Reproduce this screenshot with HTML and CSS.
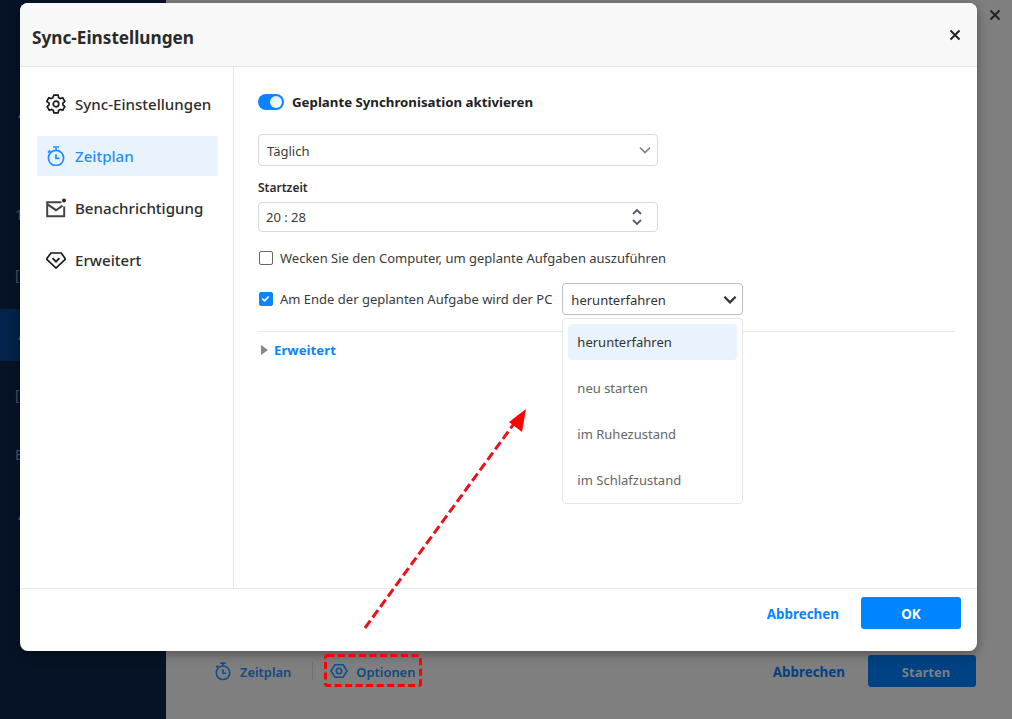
FILE: index.html
```html
<!DOCTYPE html>
<html lang="de">
<head>
<meta charset="utf-8">
<title>Sync-Einstellungen</title>
<link rel="stylesheet" href="styles.css">
</head>
<body>
<div class="app">
  <aside class="app-side">
    <span class="ghost ghost-first">▲</span>
    <span class="ghost">1</span>
    <span class="ghost">[</span>
    <span class="ghost ghost-active">▲</span>
    <span class="ghost">[</span>
    <span class="ghost">E</span>
    <span class="ghost">▲</span>
  </aside>
  <main class="app-main">
    <div class="app-top"><svg class="icon-x" viewBox="0 0 12 12"><path d="M1.5 1.5l9 9M10.5 1.5l-9 9"/></svg></div>
    <div class="app-bottom">
      <span class="app-link"><svg class="icon-18" viewBox="0 0 20 20"><path d="M7 1.3h6M10 1.5v3M10 4.5a7.5 7.5 0 1 0 0 15 7.5 7.5 0 0 0 0-15zM10 8v4.5h3.5M2.5 6l2-2"/></svg><span class="nudge">Zeitplan</span></span>
      <span class="app-divider"></span>
      <span class="app-link"><svg class="icon-18" viewBox="0 0 20 20"><path d="M5.5 3h9l4.5 7-4.5 7h-9L1 10z"/><circle cx="10" cy="10" r="3"/></svg><span class="nudge">Optionen</span></span>
      <span class="app-spacer"></span>
      <span class="app-cancel nudge">Abbrechen</span>
      <span class="app-start">Starten</span>
    </div>
  </main>
</div>

<section class="dialog">
  <header class="dialog-head">
    <h1>Sync-Einstellungen</h1>
    <svg class="icon-x" viewBox="0 0 12 12"><path d="M1.5 1.5l9 9M10.5 1.5l-9 9"/></svg>
  </header>
  <div class="dialog-body">
    <nav class="tabs">
      <a class="tab">
        <svg class="tab-icon" viewBox="0 0 20 20"><path d="M7.9 1.2h4.2l.6 2.5 1.5.9 2.5-.8 2.1 3.6-1.9 1.7v1.8l1.9 1.7-2.1 3.6-2.5-.8-1.5.9-.6 2.5H7.9l-.6-2.5-1.5-.9-2.5.8-2.1-3.6 1.9-1.7V9.1L.7 7.4l2.1-3.6 2.5.8 1.5-.9z"/><circle cx="10" cy="10" r="2.8"/></svg>
        Sync-Einstellungen
      </a>
      <a class="tab tab-active">
        <svg class="tab-icon" viewBox="0 0 20 20"><path d="M7 1h6M10 2v2.4M10 4.4a7.6 7.6 0 1 0 0 15.2 7.6 7.6 0 0 0 0-15.2zM10 8.3v4h3.5M2 6.6l2.3-2.3"/></svg>
        Zeitplan
      </a>
      <a class="tab">
        <svg class="tab-icon tab-icon-mail" viewBox="0 0 20 20"><path d="M15.5 4.2H1.2v14h17V8.5M1.2 6.2l8.8 6 6.5-4.6"/><circle class="dot" cx="18" cy="2.6" r="2"/></svg>
        Benachrichtigung
      </a>
      <a class="tab">
        <svg class="tab-icon" viewBox="0 0 20 20"><path d="M5 3h10.2L19.5 9 10 18 .5 9z"/><path d="M6.5 8.2L10 11.7l3.5-3.5"/></svg>
        Erweitert
      </a>
    </nav>
    <div class="panel">
      <div class="switch-row">
        <span class="switch"><span class="switch-knob"></span></span>
        <strong>Geplante Synchronisation aktivieren</strong>
      </div>
      <div class="field field-select">
        <span class="field-text">Täglich</span>
        <svg class="chev" viewBox="0 0 12 8"><path d="M1 1.5l5 5 5-5"/></svg>
      </div>
      <label class="field-label">Startzeit</label>
      <div class="field field-time">
        <span>20 : 28</span>
        <svg class="spin" viewBox="0 0 12 20"><path d="M2 7l4-4 4 4M2 13l4 4 4-4"/></svg>
      </div>
      <div class="check-row check-row-first">
        <span class="check"></span>
        <span>Wecken Sie den Computer, um geplante Aufgaben auszuführen</span>
      </div>
      <div class="check-row check-row-second">
        <span class="check check-on"><svg viewBox="0 0 14 14"><path d="M3 7.2l2.8 2.8L11 4.5"/></svg></span>
        <span>Am Ende der geplanten Aufgabe wird der PC</span>
        <div class="combo">
          <span class="nudge">herunterfahren</span>
          <svg class="chev chev-dark" viewBox="0 0 12 8"><path d="M1 1.5l5 5 5-5"/></svg>
          <ul class="menu">
            <li class="menu-item menu-item-active">herunterfahren</li>
            <li class="menu-item">neu starten</li>
            <li class="menu-item">im Ruhezustand</li>
            <li class="menu-item">im Schlafzustand</li>
          </ul>
        </div>
      </div>
      <div class="advanced">
        <span class="tri"></span>
        <a>Erweitert</a>
      </div>
    </div>
  </div>
  <footer class="dialog-foot">
    <a class="foot-cancel nudge">Abbrechen</a>
    <a class="foot-ok"><span class="nudge">OK</span></a>
  </footer>
</section>

<svg class="annotation" width="1012" height="719" viewBox="0 0 1012 719">
  <rect class="anno-box" x="325.5" y="655.5" width="95" height="30" rx="2"/>
  <path class="anno-line" d="M365 628L516 421"/>
  <path class="anno-head" d="M526 409L522 432L509 422z"/>
</svg>
</body>
</html>
```
FILE: styles.css
```css
* { box-sizing: border-box; }
html, body { margin: 0; height: 100%; }
body {
  width: 1012px;
  height: 719px;
  overflow: hidden;
  position: relative;
  font-family: "Noto Sans", "Open Sans", sans-serif;
  font-size: 13px;
  color: #333;
  background: #7f7f7f;
}
ul { list-style: none; margin: 0; padding: 0; }
.nudge { padding-top: 2px; }

/* Dimmed application behind the dialog */
.app { display: flex; height: 719px; }
.app-side {
  width: 166px;
  background: #061327;
  display: flex;
  flex-direction: column;
  padding-top: 83px;
}
.ghost {
  height: 60px;
  line-height: 60px;
  padding-left: 15px;
  font-size: 14px;
  color: #4d5666;
}
.ghost-first { height: 102px; }
.ghost-active { background: #03234a; height: 52px; line-height: 52px; margin: 4px 0; }
.app-main { flex: 1; display: flex; flex-direction: column; }
.app-top { display: flex; justify-content: flex-end; padding: 9px 11px 0 0; flex: 1; }
.icon-x { width: 12px; height: 12px; fill: none; stroke: #222; stroke-width: 2; }
.app-bottom {
  display: flex;
  align-items: center;
  height: 32px;
  margin-bottom: 32px;
  padding: 0 36px 0 48px;
  font-weight: 600;
  font-size: 12.9px;
}
.app-link { display: flex; align-items: center; gap: 8px; color: #0f4a85; }
.icon-18 { width: 18px; height: 20px; fill: none; stroke: #0f4f92; stroke-width: 1.8; }
.app-divider { width: 1px; height: 18px; background: #6f6f6f; margin: 0 17px 0 21px; }
.app-spacer { flex: 1; }
.app-cancel { font-size: 13.4px; font-weight: 700; color: #04417f; }
.app-start {
  width: 108px;
  height: 32px;
  margin-left: 23px;
  padding: 2px 0 0 8px;
  border-radius: 3px;
  background: #004283;
  color: #7f7f7f;
  font-size: 13px;
  font-weight: 700;
  display: flex;
  align-items: center;
  justify-content: center;
}

/* Dialog */
.dialog {
  position: absolute;
  left: 20px;
  top: 3px;
  width: 957px;
  height: 648px;
  background: #fff;
  border-radius: 8px;
  box-shadow: 0 3px 12px rgba(0, 0, 0, .35);
  display: flex;
  flex-direction: column;
}
.dialog-head {
  height: 64px;
  flex: none;
  background: #f8f8f8;
  border-bottom: 1px solid #e5e5e5;
  border-radius: 8px 8px 0 0;
  display: flex;
  align-items: center;
  justify-content: space-between;
  padding: 0 16px 0 12px;
}
.dialog-head h1 { margin: 5px 0 0; font-size: 17.2px; font-weight: 700; color: #2a2a2a; }
.dialog-body { flex: 1; display: flex; min-height: 0; }
.tabs {
  width: 214px;
  flex: none;
  border-right: 1px solid #e8e8e8;
  padding: 17px 15px 0 17px;
  display: flex;
  flex-direction: column;
  gap: 12px;
}
.tab {
  height: 40px;
  display: flex;
  align-items: center;
  gap: 9px;
  padding-left: 9px;
  border-radius: 2px;
  font-size: 15.1px;
  font-weight: 500;
  color: #2d2d2d;
}
.tab-active { background: #e9f3fe; color: #1e8fff; }
.tab-icon { width: 20px; height: 20px; flex: none; fill: none; stroke: #1a1a1a; stroke-width: 1.7; }
.tab-active .tab-icon { stroke: #1e8fff; }
.tab-icon-mail { stroke: #444; stroke-width: 2; }
.dot { fill: #222; stroke: none; }

.panel { flex: 1; padding: 0 22px 0 24px; }
.switch-row { display: flex; align-items: center; gap: 8px; height: 20px; margin-top: 25px; font-size: 13.25px; color: #222; }
.switch-row strong { font-weight: 700; }
.switch {
  width: 26px;
  height: 16px;
  border-radius: 8px;
  background: #0a84ff;
  display: flex;
  justify-content: flex-end;
  align-items: center;
  padding-right: 2px;
}
.switch-knob { width: 12px; height: 12px; border-radius: 50%; background: linear-gradient(135deg, #d7e8fb, #fff); }

.field {
  width: 400px;
  border: 1px solid #d9d9e3;
  border-radius: 4px;
  display: flex;
  align-items: center;
  justify-content: space-between;
  padding: 0 8px;
  font-size: 13px;
  color: #3b3b3b;
}
.field-select { height: 32px; margin-top: 22px; padding-right: 6px; }
.field-text { padding-top: 2px; }
.field-label { display: block; margin-top: 13px; height: 17px; line-height: 17px; font-size: 12px; font-weight: 600; color: #2b2b2b; }
.field-time { height: 30px; margin-top: 6px; padding: 0 14px 0 7px; }
.chev { width: 12px; height: 8px; fill: none; stroke: #7c8087; stroke-width: 1.6; }
.chev-dark { width: 14px; height: 9px; stroke: #333; stroke-width: 2; }
.spin { width: 12px; height: 20px; fill: none; stroke: #555b66; stroke-width: 1.8; }

.check-row { display: flex; align-items: center; gap: 7px; font-size: 13px; color: #3a3a3a; }
.check-row-first { height: 20px; margin-top: 16px; padding-left: 1px; }
.check-row-second { height: 32px; margin-top: 15px; padding-left: 1px; }
.check {
  width: 14px;
  height: 14px;
  flex: none;
  border: 1.5px solid #666;
  border-radius: 2px;
  background: #fff;
}
.check-on { background: #0a84ff; border-color: #0a84ff; display: flex; }
.check-on svg { width: 11px; height: 11px; fill: none; stroke: #fff; stroke-width: 2; }
.combo {
  position: relative;
  width: 181px;
  height: 32px;
  margin-left: 3px;
  border: 1px solid #bdbdc6;
  border-radius: 4px;
  display: flex;
  align-items: center;
  justify-content: space-between;
  padding: 0 5px 0 8px;
  color: #333;
}
.menu {
  position: absolute;
  left: -1px;
  top: 34px;
  width: 181px;
  height: 186px;
  padding: 5px;
  background: #fff;
  border: 1px solid #e6e6e6;
  border-radius: 4px;
  z-index: 2;
  display: flex;
  flex-direction: column;
  gap: 10px;
}
.menu-item { height: 36px; line-height: 37px; padding-left: 9px; border-radius: 4px; color: #666; }
.menu-item-active { background: #e9f3fe; color: #333; }
.advanced {
  margin-top: 16px;
  padding-top: 7px;
  height: 30px;
  border-top: 1px solid #e8e8e8;
  display: flex;
  align-items: center;
  gap: 6px;
  padding-left: 3px;
  width: 697px;
  font-size: 13.25px;
  font-weight: 700;
  color: #0a84ff;
}
.tri {
  width: 0;
  height: 0;
  border-left: 7px solid #808890;
  border-top: 5px solid transparent;
  border-bottom: 5px solid transparent;
}

.dialog-foot {
  height: 63px;
  flex: none;
  border-top: 1px solid #e8e8e8;
  display: flex;
  align-items: center;
  justify-content: flex-end;
  gap: 22px;
  padding: 0 16px 14px 0;
  font-size: 13.4px;
  font-weight: 700;
  color: #0a84ff;
}
.foot-ok {
  width: 100px;
  height: 32px;
  border-radius: 3px;
  background: #0084ff;
  color: #fff;
  display: flex;
  align-items: center;
  justify-content: center;
}

/* Red annotation drawn over the screenshot */
.annotation { position: absolute; left: 0; top: 0; pointer-events: none; }
.anno-box { fill: none; stroke: #f00; stroke-width: 3; stroke-dasharray: 7 3.5; }
.anno-line { fill: none; stroke: #e8121b; stroke-width: 3; stroke-dasharray: 9 4; }
.anno-head { fill: #f00; }
```
